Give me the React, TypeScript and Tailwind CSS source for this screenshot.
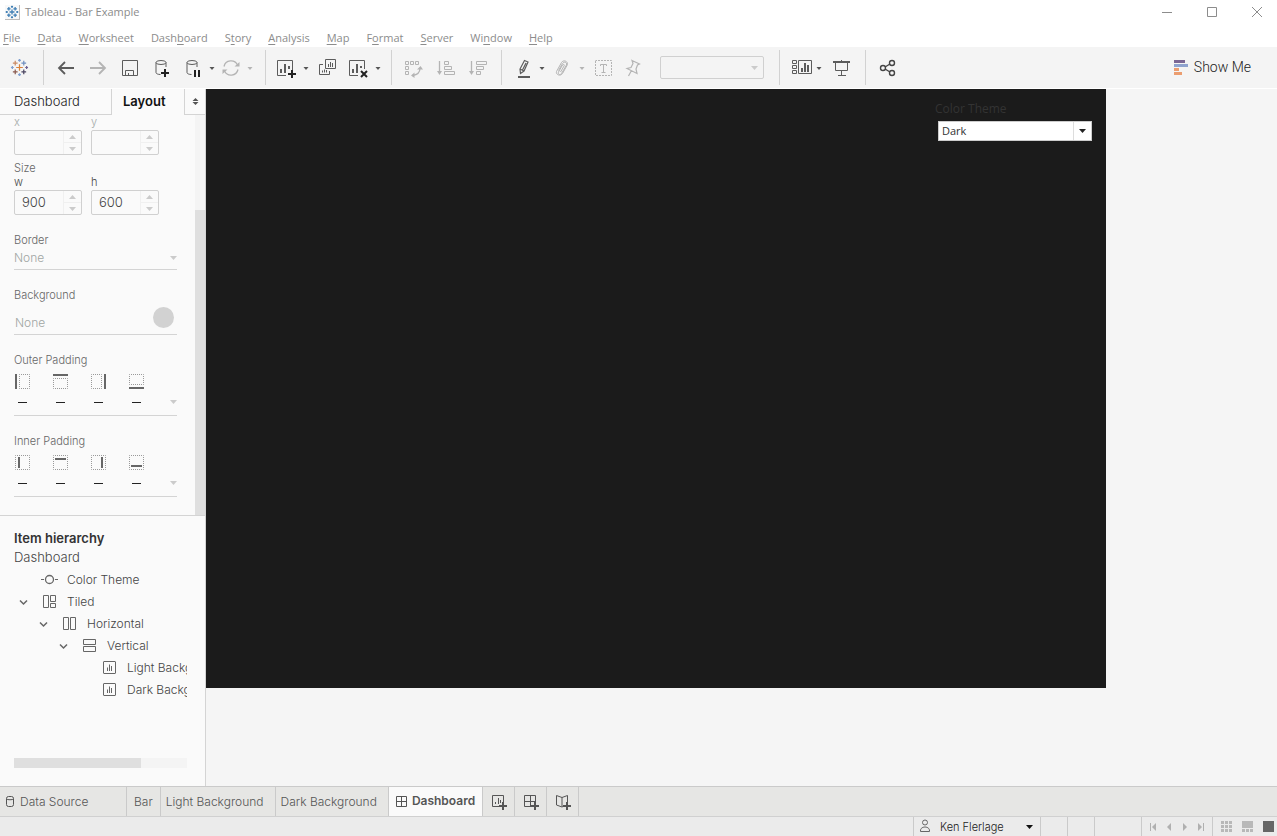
import React, { useState } from 'react';

//
// Menu entries: text before the mnemonic, the mnemonic, text after
//
const MENUS: [string, string, string][] = [
  ['', 'F', 'ile'],
  ['', 'D', 'ata'],
  ['', 'W', 'orksheet'],
  ['Dash', 'b', 'oard'],
  ['S', 't', 'ory'],
  ['', 'A', 'nalysis'],
  ['', 'M', 'ap'],
  ['F', 'o', 'rmat'],
  ['', 'S', 'erver'],
  ['Wi', 'n', 'dow'],
  ['', 'H', 'elp'],
];

const UI_FONT = "font-['Inter','Liberation_Sans',sans-serif]";
const SYSTEM_FONT = "font-['Open_Sans','Liberation_Sans',sans-serif]";

type Side = 'left' | 'top' | 'right' | 'bottom';
const SIDES: Side[] = ['left', 'top', 'right', 'bottom'];

//
// Icons
//
interface IconProps {
  children: React.ReactNode;
  size?: number;
  className?: string;
}

function Icon({ children, size = 20, className = '' }: IconProps) {
  return (
    <svg
      width={size}
      height={size}
      viewBox={`0 0 ${size} ${size}`}
      fill="none"
      stroke="currentColor"
      className={`shrink-0 ${className}`}
      aria-hidden="true"
    >
      {children}
    </svg>
  );
}

function Caret({ className = 'text-[#555]' }: { className?: string }) {
  return (
    <svg width="8" height="8" viewBox="0 0 8 8" className={`shrink-0 ${className}`} aria-hidden="true">
      <path d="M1.5 3h5L4 6z" fill="currentColor" />
    </svg>
  );
}

function Triangle({ className = 'text-[#cbcbcb]' }: { className?: string }) {
  return (
    <svg width="7" height="4" viewBox="0 0 7 4" className={`shrink-0 ${className}`} aria-hidden="true">
      <path d="M0 0h7L3.500 4z" fill="currentColor" />
    </svg>
  );
}

const LOGO_MARKS: [number, number, number, string][] = [
  [10, 10, 3.5, '#d9823b'],
  [5.5, 5.5, 2.5, '#c98a63'],
  [14.5, 5.5, 2.5, '#6f8fc0'],
  [5.5, 14.5, 2.5, '#8a5a4e'],
  [14.5, 14.5, 2.5, '#4a4460'],
  [10, 2.5, 1.5, '#7f9fd0'],
  [2.5, 10, 1.5, '#7f9fd0'],
  [17.5, 10, 1.5, '#6b5f92'],
  [10, 17.5, 1.5, '#7f9fd0'],
];

function TableauMark({ size, mono = false }: { size: number; mono?: boolean }) {
  return (
    <svg width={size} height={size} viewBox="0 0 20 20" aria-hidden="true">
      {LOGO_MARKS.map(([x, y, r, color]) => (
        <path
          key={`${x}-${y}`}
          d={`M${x - r} ${y}H${x + r}M${x} ${y - r}V${y + r}`}
          stroke={mono ? '#3f7fb5' : color}
          strokeWidth={mono ? 1.8 : 1.3}
        />
      ))}
    </svg>
  );
}

function DatabaseShape() {
  return (
    <>
      <ellipse cx="9" cy="4.500" rx="5" ry="2" />
      <path d="M4 4.500v10c0 1.200 2 2 4.500 2M14 4.500V9" />
    </>
  );
}

function ToolButton({ label, muted = false, children }: { label: string; muted?: boolean; children: React.ReactNode }) {
  return (
    <button type="button" aria-label={label} className={`flex shrink-0 ${muted ? 'text-[#b4b4b4]' : 'text-[#5c5c5c]'}`}>
      {children}
    </button>
  );
}

function ToolCaret({ label, muted = false }: { label: string; muted?: boolean }) {
  return (
    <button type="button" aria-label={label} className="flex shrink-0">
      <Caret className={muted ? 'text-[#b4b4b4]' : 'text-[#555]'} />
    </button>
  );
}

function ToolGroup({ className, children }: { className: string; children: React.ReactNode }) {
  return <div className={`flex h-[35px] items-center border-r border-[#d2d2d2] ${className}`}>{children}</div>;
}

//
// Title bar + menu
//
function TitleBar() {
  return (
    <header className={`bg-white text-[11px] font-normal text-[#8c8c8c] ${SYSTEM_FONT}`}>
      <div className="flex h-6 items-center justify-between pr-[14px] pl-[5px]">
        <div className="flex items-center gap-[5px]">
          <span className="flex border-r border-b border-[#bbb] bg-[#f8f8f8]">
            <TableauMark size={14} mono />
          </span>
          <h1 className="font-normal">Tableau - Bar Example</h1>
        </div>
        <div className="flex gap-[33px]">
          <button type="button" aria-label="Minimize">
            <Icon size={12}><path d="M1 6.500h10" /></Icon>
          </button>
          <button type="button" aria-label="Maximize">
            <Icon size={12}><path d="M1.500 1.500h9v9h-9z" /></Icon>
          </button>
          <button type="button" aria-label="Close">
            <Icon size={12}><path d="M1 1l10 10M11 1L1 11" /></Icon>
          </button>
        </div>
      </div>
      <nav className="flex h-[23px] items-center gap-[17px] pt-[6px] pl-[3px]">
        {MENUS.map(([before, key, after]) => (
          <button type="button" key={before + key + after}>
            {before}
            <span className="underline underline-offset-2">{key}</span>
            {after}
          </button>
        ))}
      </nav>
    </header>
  );
}

//
// Toolbar
//
function Toolbar() {
  return (
    <div className="flex h-[42px] items-center border-b border-white bg-[#f4f4f4]">
      <ToolGroup className="pr-[14px] pl-[10px]">
        <ToolButton label="Start page"><TableauMark size={19} /></ToolButton>
      </ToolGroup>

      <ToolGroup className="gap-3 pr-[11px] pl-3">
        <ToolButton label="Undo">
          <Icon><path d="M18 10H3M9 4l-6 6 6 6" strokeWidth="1.800" /></Icon>
        </ToolButton>
        <ToolButton label="Redo" muted>
          <Icon><path d="M2 10h15M11 4l6 6-6 6" strokeWidth="1.800" /></Icon>
        </ToolButton>
        <ToolButton label="Save">
          <Icon><path d="M2.500 2.500h15v15h-15zM5.500 17.500v-5h8v5M8.500 17.500v-2.500" /></Icon>
        </ToolButton>
        <ToolButton label="New data source">
          <Icon>
            <DatabaseShape />
            <path d="M9 15h8M13 11v8" stroke="#222" strokeWidth="2" />
          </Icon>
        </ToolButton>
        <div className="flex items-center gap-[5px]">
          <ToolButton label="Pause auto updates">
            <Icon className="-ml-px">
              <DatabaseShape />
              <path d="M12 12v7M16 12v7" stroke="#222" strokeWidth="2" />
            </Icon>
          </ToolButton>
          <ToolCaret label="Auto update options" />
          <ToolButton label="Run update" muted>
            <Icon>
              <path
                d="M3 8.500A7.200 7.200 0 0 1 16.500 7M17 11.500A7.200 7.200 0 0 1 3.500 13"
                strokeWidth="1.300"
              />
              <path d="M18.500 4v4.500h-5zM1.500 16v-4.500h5z" fill="currentColor" stroke="none" />
            </Icon>
          </ToolButton>
          <ToolCaret label="Run update options" muted />
        </div>
      </ToolGroup>

      <ToolGroup className="gap-2 pr-[9px] pl-[10px]">
        <div className="flex items-center gap-[6px]">
          <ToolButton label="New worksheet">
            <Icon>
              <path d="M10 17.500H1.500v-15h15V12" />
              <path d="M5 15v-4M9 15V6M13 11V8" strokeWidth="2" />
              <path d="M12 16h8M16 12v8" stroke="#222" strokeWidth="2" />
            </Icon>
          </ToolButton>
          <ToolCaret label="New worksheet options" />
        </div>
        <div className="flex items-center gap-[10px]">
          <ToolButton label="Duplicate">
            <Icon>
              <path d="M7.500 1.500h10v9h-10zM5 6.500H1.500v10h10V13" />
              <path d="M10.500 9V6M12.500 9V4M14.500 9V5M4.500 14.500v-2M6.500 14.500v-3M8.500 14.500V12" />
            </Icon>
          </ToolButton>
          <div className="flex items-center gap-[6px]">
            <ToolButton label="Clear sheet">
              <Icon>
                <path d="M10 17.500H1.500v-15h15V11" />
                <path d="M5 15v-4M9 15V6M13 10V8" strokeWidth="2" />
                <path d="M13 13l6 6M19 13l-6 6" stroke="#222" strokeWidth="2" />
              </Icon>
            </ToolButton>
            <ToolCaret label="Clear sheet options" />
          </div>
        </div>
      </ToolGroup>

      <ToolGroup className="gap-3 pr-[13px] pl-3">
        <ToolButton label="Swap rows and columns" muted>
          <Icon>
            <path d="M1.500 3.500h3v3h-3zM6.500 3.500h3v3h-3zM11.500 3.500h3v3h-3zM1.500 8.500h3v3h-3zM1.500 13.500h3v3h-3z" />
            <path d="M16 10c0 4.500-3.500 7-7.500 7.500" strokeWidth="1.300" />
            <path d="M13 11.500h6L16.500 8zM10.500 14.500v5.500L7 17.500z" fill="currentColor" stroke="none" />
          </Icon>
        </ToolButton>
        <ToolButton label="Sort ascending" muted>
          <Icon>
            <path d="M3.500 3v11" strokeWidth="1.300" />
            <path d="M1 13h5l-2.500 4z" fill="currentColor" stroke="none" />
            <path d="M8.500 3.500h4v3h-4zM8.500 8.500h7v3h-7zM8.500 13.500h10v3h-10z" />
          </Icon>
        </ToolButton>
        <ToolButton label="Sort descending" muted>
          <Icon>
            <path d="M3.500 3v11" strokeWidth="1.300" />
            <path d="M1 13h5l-2.500 4z" fill="currentColor" stroke="none" />
            <path d="M8.500 3.500h10v3h-10zM8.500 8.500h7v3h-7zM8.500 13.500h4v3h-4z" />
          </Icon>
        </ToolButton>
      </ToolGroup>

      <ToolGroup className="gap-2 pr-[15px] pl-3">
        <div className="flex items-center gap-1">
          <ToolButton label="Highlight">
            <Icon>
              <path d="M10.500 2.500l3.500 1.500-4 9-3.500 2.500-.5-4.500zM6 11l4 2M12 5L8.500 12" strokeWidth="1.200" />
              <path d="M4 19h12" strokeWidth="2" />
            </Icon>
          </ToolButton>
          <ToolCaret label="Highlight options" />
        </div>
        <div className="flex items-center gap-1">
          <ToolButton label="Group members" muted>
            <Icon>
              <path d="M4.500 12.500L8.500 5.500c1.500-2.500 5-1 4 1.500L7.500 15.500c-1.500 2-4 .8-3-1.500l4-7c.8-1.200 2.300-.5 1.700.8L6.500 14M13.500 6.500L8.500 15.500c-1.800 3-7 1.500-6-2l5-9c1.800-3 6.500-1.500 6 2" />
            </Icon>
          </ToolButton>
          <ToolCaret label="Group options" muted />
        </div>
        <ToolButton label="Show mark labels" muted>
          <Icon>
            <path d="M1.500 2.500h16v15h-16z" strokeDasharray="2 1" strokeDashoffset=".5" />
            <path d="M6.500 8V6.500h6V8M9.500 6.500v8M7.500 14.500h4" />
          </Icon>
        </ToolButton>
        <ToolButton label="Fix axes" muted>
          <Icon className="ml-px">
            <path d="M9 2.500l7.500 3.500-2 1-1.500 4 1 4.500L4 10.500l4-1 2-4zM8.500 12.500L5.500 18" strokeWidth="1.200" />
          </Icon>
        </ToolButton>
        <div className="relative ml-[9px] flex">
          <select
            aria-label="Fit"
            disabled
            className="h-[23px] w-[104px] appearance-none rounded-[2px] border border-[#d0d0d0] bg-[#f4f4f4]"
          />
          <Triangle className="pointer-events-none absolute top-[10px] right-[6px] text-[#cbcbcb]" />
        </div>
      </ToolGroup>

      <ToolGroup className="gap-2 pr-[14px] pl-3">
        <div className="flex items-center gap-[2px]">
          <ToolButton label="Show or hide cards">
            <Icon size={21}>
              <path d="M.5 3.500h4v3h-4zM.5 8.500h4v3h-4zM.5 13.500h4v3h-4zM6.500 3.500h13v13h-13z" />
              <path d="M10 15v-4M13 15V6M16 15V8" strokeWidth="2" />
            </Icon>
          </ToolButton>
          <ToolCaret label="Card options" />
        </div>
        <ToolButton label="Presentation mode">
          <Icon>
            <path d="M2 4h17" strokeWidth="2" />
            <path d="M4.500 4v8.500h12V4M10.500 12.500v5M7 17.500h8M10.500 2v1" />
          </Icon>
        </ToolButton>
      </ToolGroup>

      <div className="pl-3">
        <ToolButton label="Share">
          <Icon className="text-[#444]">
            <path d="M7 9l5-3M7 11l5 3" strokeWidth="1.400" />
            <circle cx="5" cy="10" r="2.500" strokeWidth="1.400" />
            <circle cx="14" cy="5" r="2.500" strokeWidth="1.400" />
            <circle cx="14" cy="15" r="2.500" strokeWidth="1.400" />
          </Icon>
        </ToolButton>
      </div>

      <button
        type="button"
        className="mr-[26px] ml-auto flex items-center gap-[5px] font-['Roboto','Liberation_Sans',sans-serif] text-[14px] text-[#222]"
      >
        <svg width="15" height="16" viewBox="0 0 15 16" aria-hidden="true">
          <path d="M0 0h11v3H0z" fill="#7b6694" />
          <path d="M0 4h14v3H0z" fill="#8fa3cf" />
          <path d="M0 8h5v3H0zM0 12h8v3H0z" fill="#eb9d70" />
        </svg>
        Show Me
      </button>
    </div>
  );
}

//
// Side panel
//
interface SpinFieldProps {
  label: string;
  value: string;
  muted?: boolean;
  onChange: (value: string) => void;
}

function SpinField({ label, value, muted = false, onChange }: SpinFieldProps) {
  const step = (delta: number) => onChange(String(Number(value) + delta));

  return (
    <div className="w-[68px]">
      <label
        htmlFor={`field-${label}`}
        className={`block text-[11px] leading-[14px] ${muted ? 'text-[#a3aaa8]' : 'text-[#444]'}`}
      >
        {label}
      </label>
      <div className="mt-px flex h-[25px] rounded-[2px] border border-[#d0d0d0]">
        <input
          id={`field-${label}`}
          value={value}
          onChange={(e) => onChange(e.target.value)}
          className="w-12 min-w-0 bg-transparent pl-[7px] text-[13px] text-[#444] outline-none"
        />
        <div className="flex flex-1 flex-col border-l border-[#f0f0f0]">
          <button
            type="button"
            aria-label={`Increase ${label}`}
            onClick={() => step(1)}
            className="flex flex-1 items-center justify-center border-b border-[#f0f0f0]"
          >
            <Triangle className="rotate-180 text-[#cbcbcb]" />
          </button>
          <button
            type="button"
            aria-label={`Decrease ${label}`}
            onClick={() => step(-1)}
            className="flex flex-1 items-center justify-center"
          >
            <Triangle />
          </button>
        </div>
      </div>
    </div>
  );
}

const OUTER_ICONS: Record<Side, [string, string]> = {
  left: ['M4.500.500h10v14h-10z', 'M1 0v15'],
  top: ['M.500 4.500h14v10H.500z', 'M0 1h15'],
  right: ['M.500.500h10v14H.500z', 'M14 0v15'],
  bottom: ['M.500.500h14v10H.500z', 'M0 14h15'],
};

const INNER_ICONS: Record<Side, string> = {
  left: 'M4 2v11',
  top: 'M2 4h11',
  right: 'M11 2v11',
  bottom: 'M2 11h11',
};

function PaddingSection({ title, inner = false }: { title: string; inner?: boolean }) {
  return (
    <section>
      <h3 className="text-[11px] leading-4">{title}</h3>
      <div className="flex justify-between border-b border-[#d4d4d4] pt-[6px] pb-[10px]">
        <div className="flex gap-[23px] pl-px">
          {SIDES.map((side) => (
            <button type="button" key={side} aria-label={`${title} ${side}`} className="flex flex-col items-center">
              <Icon size={15}>
                <path
                  d={inner ? 'M.500.500h14v14H.500z' : OUTER_ICONS[side][0]}
                  stroke="#999"
                  strokeDasharray="1 1"
                  strokeDashoffset=".5"
                />
                <path d={inner ? INNER_ICONS[side] : OUTER_ICONS[side][1]} stroke="#666" strokeWidth="2" />
              </Icon>
              <span className="mt-[13px] mb-[2px] h-px w-[9px] bg-[#222]" />
            </button>
          ))}
        </div>
        <button type="button" aria-label={`${title} options`} className="flex self-end pb-px">
          <Triangle />
        </button>
      </div>
    </section>
  );
}

function LayoutForm() {
  const [x, setX] = useState('');
  const [y, setY] = useState('');
  const [w, setW] = useState('900');
  const [h, setH] = useState('600');

  return (
    <div className="flex-1 pl-[14px] text-[#666]">
      <div className="flex gap-[9px]">
        <SpinField label="x" value={x} onChange={setX} muted />
        <SpinField label="y" value={y} onChange={setY} muted />
      </div>
      <h3 className="mt-[6px] text-[11px] leading-[14px]">Size</h3>
      <div className="flex gap-[9px]">
        <SpinField label="w" value={w} onChange={setW} />
        <SpinField label="h" value={h} onChange={setH} />
      </div>

      <div className="mr-[18px]">
        <label htmlFor="border" className="mt-[17px] block text-[11px] leading-4">
          Border
        </label>
        <div className="relative border-b border-[#d4d4d4]">
          <select
            id="border"
            className="block h-[21px] w-full appearance-none bg-transparent pb-[2px] text-[12px] text-[#a0a5a3] outline-none"
          >
            <option>None</option>
          </select>
          <Triangle className="pointer-events-none absolute top-2 right-0 text-[#cbcbcb]" />
        </div>

        <h3 className="mt-[17px] text-[11px] leading-4">Background</h3>
        <button
          type="button"
          className="flex w-full items-end justify-between border-b border-[#d4d4d4] pt-1 pr-[3px] pb-[6px] pl-px text-[12px] text-[#a0a5a3]"
        >
          <span className="-mb-[3px] leading-4">None</span>
          <span className="size-[21px] rounded-full bg-[#d2d2d2]" />
        </button>

        <div className="mt-[17px]">
          <PaddingSection title="Outer Padding" />
        </div>
        <div className="mt-[17px]">
          <PaddingSection title="Inner Padding" inner />
        </div>
      </div>
    </div>
  );
}

interface TreeItem {
  name: string;
  indent: string;
  expandable: boolean;
  icon: React.ReactNode;
}

const SHEET_ICON = (
  <>
    <rect x="2.500" y="2.500" width="12" height="12" rx=".5" />
    <path d="M6.500 12V8.500M8.500 12V5.500M10.500 12V7" />
  </>
);

const TREE: TreeItem[] = [
  {
    name: 'Color Theme',
    indent: 'pl-[18px]',
    expandable: false,
    icon: (
      <>
        <circle cx="8.500" cy="8.500" r="4" strokeWidth="1.300" />
        <path d="M0 8.500h3M14 8.500h3" />
      </>
    ),
  },
  {
    name: 'Tiled',
    indent: 'pl-[18px]',
    expandable: true,
    icon: <path d="M2.500 2.500h5v12h-5zM9.500 2.500h5v6h-5zM9.500 10.500h5v4h-5z" />,
  },
  {
    name: 'Horizontal',
    indent: 'pl-[38px]',
    expandable: true,
    icon: <path d="M2.500 2.500h5v12h-5zM9.500 2.500h5v12h-5z" />,
  },
  {
    name: 'Vertical',
    indent: 'pl-[58px]',
    expandable: true,
    icon: <path d="M2.500 2.500h12v5h-12zM2.500 9.500h12v5h-12z" />,
  },
  { name: 'Light Background', indent: 'pl-[78px]', expandable: false, icon: SHEET_ICON },
  { name: 'Dark Background', indent: 'pl-[78px]', expandable: false, icon: SHEET_ICON },
];

function ItemHierarchy() {
  return (
    <section className="h-[271px] border-t border-[#d4d4d4] pt-[13px]">
      <h2 className="pl-[14px] text-[13px] leading-[19px] font-semibold text-[#333]">Item hierarchy</h2>
      <p className="pl-[14px] text-[13px] leading-[19px] text-[#444]">Dashboard</p>
      <ul className="mr-[18px] overflow-hidden pt-[2px] text-[12px] text-[#444]">
        {TREE.map((item) => (
          <li key={item.name} className={`flex h-[22px] items-center whitespace-nowrap ${item.indent}`}>
            <span className="mr-[11px] flex size-3 shrink-0 items-center">
              {item.expandable && (
                <Icon size={12} className="text-[#666]"><path d="M2 4.500L5.500 8 9 4.500" strokeWidth="1.500" /></Icon>
              )}
            </span>
            <Icon size={18} className="mr-2 text-[#666]">{item.icon}</Icon>
            {item.name}
          </li>
        ))}
      </ul>
      <div className="mt-[57px] mr-[18px] ml-[14px] h-[10px] bg-[#f4f4f4]">
        <div className="h-full w-[127px] bg-[#dfdfdf]" />
      </div>
    </section>
  );
}

function SidePanel() {
  const [tab, setTab] = useState<'Dashboard' | 'Layout'>('Layout');
  const tabClass = (active: boolean) =>
    active ? 'font-semibold text-[#111]' : 'border-b border-[#d4d4d4] pt-px text-[#222]';

  return (
    <aside className="flex w-[206px] shrink-0 flex-col border-r border-[#d4d4d4] bg-[#fafafa]">
      <div className="flex h-[26px] text-[13px]">
        <button
          type="button"
          onClick={() => setTab('Dashboard')}
          className={`w-28 border-r border-r-[#d4d4d4] pl-[14px] text-left ${tabClass(tab === 'Dashboard')}`}
        >
          Dashboard
        </button>
        <button
          type="button"
          onClick={() => setTab('Layout')}
          className={`w-[72px] pl-[11px] text-left ${tabClass(tab === 'Layout')}`}
        >
          Layout
        </button>
        <button
          type="button"
          aria-label="Panel options"
          className="flex flex-1 items-center justify-center border-b border-l border-[#d4d4d4] text-[#555]"
        >
          <svg width="7" height="9" viewBox="0 0 7 9" aria-hidden="true">
            <path d="M.5 4h6L3.500 1zM.5 5h6L3.500 8z" fill="currentColor" />
          </svg>
        </button>
      </div>
      <div className="flex flex-1">
        <LayoutForm />
        <div className="flex w-[10px] flex-col bg-[#f4f4f4] pt-[95px]">
          <div className="flex-1 bg-[#dfdfdf]" />
        </div>
      </div>
      <ItemHierarchy />
    </aside>
  );
}

//
// Dashboard canvas
//
function Canvas() {
  return (
    <main className="flex-1 bg-[#f5f5f5]">
      <div className="flex h-[599px] w-[900px] justify-end bg-[#1b1b1b] pt-3 pr-[14px]">
        <div className={`w-[157px] font-normal ${SYSTEM_FONT}`}>
          <label htmlFor="theme" className="block text-[12px] leading-4 text-[#333]">
            Color Theme
          </label>
          <div className="relative mt-1 ml-[3px]">
            <select
              id="theme"
              defaultValue="Dark"
              className="block h-5 w-full appearance-none border border-[#ccc] bg-white pl-[3px] text-[11px] text-[#333]"
            >
              <option>Light</option>
              <option>Dark</option>
            </select>
            <span className="pointer-events-none absolute inset-y-px right-px flex w-[18px] items-center justify-center border-l border-[#ddd]">
              <Triangle className="text-[#222]" />
            </span>
          </div>
        </div>
      </div>
    </main>
  );
}

//
// Sheet tabs
//
const SHEETS = [
  { name: 'Bar', padding: 'px-[7px]' },
  { name: 'Light Background', padding: 'pr-[11px] pl-[5px]' },
  { name: 'Dark Background', padding: 'pr-[11px] pl-[5px]' },
];

const NEW_TABS = [
  { label: 'New worksheet', path: 'M8 12.500H1.500v-11h11V8M4.500 10V8M7.500 10V4M9.500 9V6' },
  { label: 'New dashboard', path: 'M8 12.500H1.500v-11h11V8M7.500 1.500v11M1.500 7.500h11' },
  { label: 'New story', path: 'M9 12l-2 1-5.500-2v-9.500l5.500 2 5.500-2V8M7 3.500v9' },
];

function SheetTabs() {
  return (
    <nav className="flex h-[30px] border-t border-[#cacaca] bg-[#e6e6e4] text-[12px] text-[#555]">
      <button type="button" className="flex w-[127px] items-center gap-1 border-r border-[#cacaca] pl-1">
        <Icon size={12}>
          <rect x="2.500" y=".5" width="7" height="10" rx="2" />
          <path d="M2.500 3c1 1 6 1 7 0" />
        </Icon>
        Data Source
      </button>
      {SHEETS.map(({ name, padding }) => (
        <button type="button" key={name} className={`border-r border-[#cacaca] ${padding}`}>
          {name}
        </button>
      ))}
      <button
        type="button"
        className="flex items-center gap-1 border-r border-[#cacaca] bg-[#fafafa] pr-[7px] pb-px pl-[6px] font-semibold"
      >
        <Icon size={13}>
          <path d="M1.500 1.500h10v10h-10zM6.500 1.500v10M1.500 6.500h10" />
        </Icon>
        Dashboard
      </button>
      {NEW_TABS.map(({ label, path }) => (
        <button
          type="button"
          key={label}
          aria-label={label}
          className="flex w-8 items-center justify-center border-r border-[#cacaca]"
        >
          <Icon size={16}>
            <path d={path} />
            <path d="M8 12h8M12 8v8" strokeWidth="2" />
          </Icon>
        </button>
      ))}
    </nav>
  );
}

//
// Status bar
//
const NAV_BUTTONS = [
  { label: 'First sheet', path: 'M1 0h1v8H1zM7 0v8L3 4z' },
  { label: 'Previous sheet', path: 'M6 0v8L2 4z' },
  { label: 'Next sheet', path: 'M2 0v8l4-4z' },
  { label: 'Last sheet', path: 'M6 0h1v8H6zM1 0v8l4-4z' },
];

const VIEW_BUTTONS = [
  {
    label: 'Show sheet sorter',
    color: 'text-[#b8b8b8]',
    path: 'M0 0h3v3H0zM4 0h3v3H4zM8 0h3v3H8zM0 4h3v3H0zM4 4h3v3H4zM8 4h3v3H8zM0 8h3v3H0zM4 8h3v3H4zM8 8h3v3H8z',
  },
  { label: 'Show filmstrip', color: 'text-[#b8b8b8]', path: 'M0 0h11v7H0zM0 8h3v3H0zM4 8h3v3H4zM8 8h3v3H8z' },
  { label: 'Show tabs', color: 'text-[#666]', path: 'M0 0h11v11H0z' },
];

function StatusBar() {
  return (
    <footer className="flex h-5 justify-end border-t border-[#d0d0d0] bg-[#ebebeb] text-[11px] text-[#222]">
      <button type="button" className="flex w-32 items-center border-x border-[#cacaca] pr-[7px] pl-[5px]">
        <Icon size={14} className="-mt-px text-[#666]">
          <circle cx="6" cy="3.500" r="2.500" />
          <path d="M1.500 12.500c-1-6 10-6 9 0z" />
        </Icon>
        <span className="ml-[7px] pt-px">Ken Flerlage</span>
        <Triangle className="ml-auto text-[#111]" />
      </button>
      <span className="w-[27px] border-r border-[#cacaca]" />
      <span className="w-[27px] border-r border-[#cacaca]" />
      <span className="w-[47px] border-r border-[#cacaca]" />
      <div className="flex w-[71px] items-center justify-center gap-2 border-r border-[#cacaca] text-[#b0b0b0]">
        {NAV_BUTTONS.map(({ label, path }) => (
          <button type="button" key={label} aria-label={label}>
            <svg width="8" height="8" viewBox="0 0 8 8" aria-hidden="true">
              <path d={path} fill="currentColor" />
            </svg>
          </button>
        ))}
      </div>
      <div className="flex items-center gap-[10px] pr-[3px] pl-2">
        {VIEW_BUTTONS.map(({ label, color, path }) => (
          <button type="button" key={label} aria-label={label} className={color}>
            <svg width="11" height="11" viewBox="0 0 11 11" aria-hidden="true">
              <path d={path} fill="currentColor" />
            </svg>
          </button>
        ))}
      </div>
    </footer>
  );
}

export default function App() {
  return (
    <div className={`flex min-h-screen flex-col font-light ${UI_FONT}`}>
      <TitleBar />
      <Toolbar />
      <div className="flex flex-1">
        <SidePanel />
        <Canvas />
      </div>
      <SheetTabs />
      <StatusBar />
    </div>
  );
}
